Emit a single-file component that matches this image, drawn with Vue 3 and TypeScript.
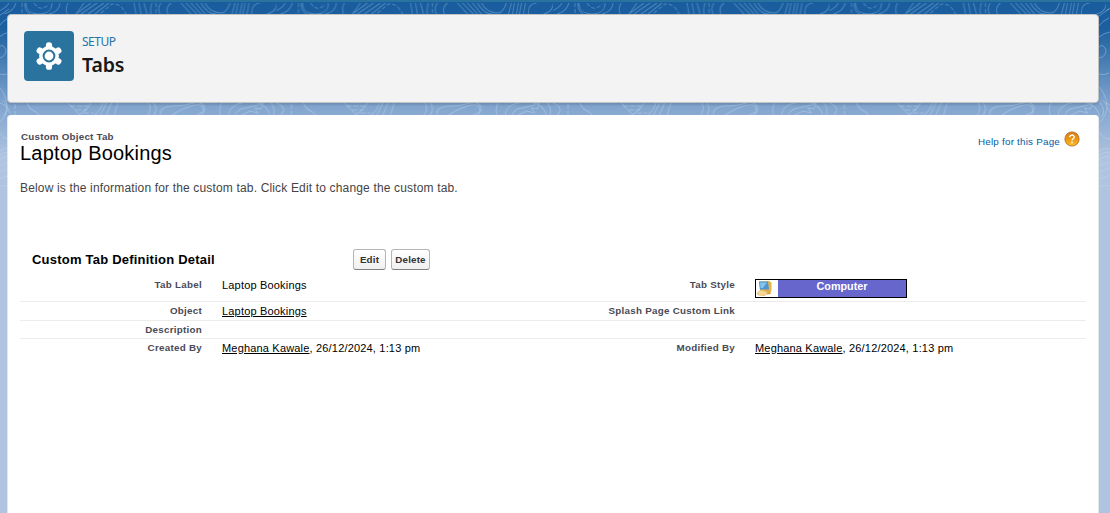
<script setup lang="ts">
interface Field { label: string; link?: string; text?: string; swatch?: string }
interface Row { height: number; left: Field; right?: Field }

const rows: Row[] = [
  { height: 26, left: { label: 'Tab Label', text: 'Laptop Bookings' }, right: { label: 'Tab Style', swatch: 'Computer' } },
  { height: 19, left: { label: 'Object', link: 'Laptop Bookings' }, right: { label: 'Splash Page Custom Link' } },
  { height: 18, left: { label: 'Description' } },
  {
    height: 22,
    left: { label: 'Created By', link: 'Meghana Kawale', text: ', 26/12/2024, 1:13 pm' },
    right: { label: 'Modified By', link: 'Meghana Kawale', text: ', 26/12/2024, 1:13 pm' },
  },
]
</script>

<template>
  <div class="page">
    <svg class="topo" width="1110" height="200" viewBox="0 0 1110 200" fill="none" aria-hidden="true">
      <defs>
        <pattern id="contours-top" width="276.5" height="14" patternUnits="userSpaceOnUse">
          <g fill="none" stroke="#8fb9de" stroke-opacity=".42" stroke-width="1">
            <path d="M-1 11Q6 8 9 3M4 14Q13 12 16 3M26 3C26 10 31 14 39 14S52 10 52 3M30 14Q24 10 25 3M49 14Q59 12 60 3M68 3Q65 8 67 14" />
            <path d="M22 3v11M34 3Q41 13 49 4" stroke-dasharray="4 2" />
            <path d="M76 14L91 3M81 14L97 3M88 14L104 3M95 14L109 3M76 14L84 3" />
            <path d="M101 13L112 4Q121 3 126 14" stroke-dasharray="4 2" />
            <path d="M134 3L136 14M139 3L141 14M144 3L147 14M151 14Q150 8 152 3M160 14Q157 8 161 3M168 14Q165 8 171 3" />
            <path d="M156 3v11" stroke-dasharray="4 2" />
            <path d="M181 3L191 14M186 3L197 14M191 3L201 14M196 3L205 14M201 3Q207 14 216 14M205 3Q210 13 222 13Q227 12 230 3M232 14L235 3M236 14L238 3M240 14L242 3M243 14L245 3M247 14L249 3M252 14Q251 4 260 3M267 14Q276 12 277 3" />
          </g>
        </pattern>
        <pattern id="contours-bottom" y="102" width="276.5" height="14" patternUnits="userSpaceOnUse">
          <g fill="none" stroke="#c9dcf2" stroke-opacity=".38" stroke-width="1">
            <path d="M0 1Q8 4 7 9L4 14M27 1Q29 7 36 10L40 14M68 1L80 13M91 1Q87 8 79 13M94 14Q102 7 103 0M100 14L107 0M106 14L112 0M114 14L118 0M148 0Q153 7 147 14M153 0Q159 7 153 14" />
            <path d="M15 2v12M70 4h18M76 8h11M84 11h10" stroke-dasharray="5 2" />
            <path d="M161 14Q158 5 173 4Q184 4 197 0Q210 3 201 14M171 14Q179 8 191 4Q205 0 203 10L195 14M221 14Q218 7 222 0M229 14C228 5 238 0 250 0S268 6 270 14M235 14Q238 6 246 6L258 3L263 1L261 7L255 6L258 11L250 9L240 14M270 0Q276 7 273 14" />
          </g>
        </pattern>
        <g id="side-contours" stroke="#c5daf1" stroke-opacity=".38">
          <path d="M0 16L10 9M0 26Q3 21 10 18M0 37Q5 33 11 32M0 47Q4 43 7 50Q7 57 0 58M0 74Q5 76 10 73M0 87Q7 94 8 106Q8 116 0 123M4 100Q9 107 11 113M0 132Q4 139 11 139M0 151Q5 147 11 149M0 155Q5 151 11 153M0 160Q5 155 11 157M0 166Q5 162 11 163M0 172L11 168M0 179L11 175M0 187Q6 184 11 186" />
        </g>
      </defs>
      <rect y="3" width="1110" height="11" fill="url(#contours-top)" />
      <rect y="102" width="1110" height="14" fill="url(#contours-bottom)" />
      <use href="#side-contours" x="-1" />
      <use href="#side-contours" x="1099" />
    </svg>

    <header class="banner">
      <div class="banner-icon">
        <svg width="28" height="28" viewBox="0 0 28 28" aria-hidden="true">
          <g fill="#fff">
            <circle cx="14" cy="14" r="9.9" />
            <g id="tooth"><rect x="10.9" y="0.2" width="6.2" height="8" rx="2.9" /></g>
            <use v-for="n in 5" :key="n" href="#tooth" :transform="`rotate(${n * 60} 14 14)`" />
          </g>
          <circle cx="14" cy="14" r="5.4" fill="#fff" stroke="#2a739e" stroke-width="2" />
        </svg>
      </div>
      <div class="banner-text">
        <span class="eyebrow">SETUP</span>
        <h1>Tabs</h1>
      </div>
    </header>

    <main class="card">
      <div class="heading">
        <div>
          <div class="type">Custom Object Tab</div>
          <h2>Laptop Bookings</h2>
        </div>
        <a class="help">
          <span>Help for this Page</span>
          <svg width="16" height="16" viewBox="0 0 16 16" aria-hidden="true">
            <defs>
              <linearGradient id="amber" x2="0" y2="1">
                <stop stop-color="#d57c13" /><stop offset=".5" stop-color="#ed9511" /><stop offset="1" stop-color="#ffc12c" />
              </linearGradient>
            </defs>
            <circle cx="8" cy="8" r="7.1" fill="url(#amber)" stroke="#a9631b" stroke-width=".8" />
            <path d="M5.8 6.2C5.8 3.4 10.2 3.4 10.2 6C10.2 7.8 8 7.7 8 9.6" fill="none" stroke="#fff" stroke-width="1.4" />
            <rect x="7.2" y="10.7" width="1.6" height="1.6" fill="#fff" />
          </svg>
        </a>
      </div>
      <p class="intro">Below is the information for the custom tab. Click Edit to change the custom tab.</p>

      <section class="detail">
        <div class="toolbar">
          <h3>Custom Tab Definition Detail</h3>
          <button class="edit">Edit</button>
          <button class="delete">Delete</button>
        </div>
        <div v-for="row in rows" :key="row.left.label" class="row" :style="{ height: `${row.height}px` }">
          <template v-for="(field, i) in [row.left, row.right]" :key="i">
            <div class="label">{{ field?.label }}</div>
            <div class="value">
              <div v-if="field?.swatch" class="swatch">
                <svg width="22" height="17" viewBox="0 0 22 17" aria-hidden="true">
                  <rect width="22" height="17" fill="#fff" />
                  <path d="M3 1.5L13 1L15.5 2.5V11L14 12.5L4 10.5Z" fill="#e9b548" />
                  <path d="M3 1.5L12 1.5L13 9.5L4 9.5Z" fill="#4d94d0" />
                  <path d="M4 2.5L11 2.5L7 8H4.6Z" fill="#83c4ec" />
                  <path d="M9 10L14 11L15 14L11 14.5L8 12Z" fill="#dba64b" />
                  <path d="M1 13L5 10L12 12L9 15.5L2 15Z" fill="#f5d894" stroke="#d6ad65" stroke-width=".6" />
                </svg>
                <span>{{ field.swatch }}</span>
              </div>
              <template v-else><a v-if="field?.link">{{ field.link }}</a>{{ field?.text }}</template>
            </div>
          </template>
        </div>
      </section>
    </main>
  </div>
</template>

<style>
body { margin: 0; overflow: hidden; }
</style>

<style scoped>
* { box-sizing: border-box; }
h1, h2, h3, p { margin: 0; }
.page {
  position: relative;
  height: 513px;
  padding: 14px 11px 0 7px;
  overflow: hidden;
  background: linear-gradient(#2a739e 2px, transparent 2px), linear-gradient(#195d9f 0, #1b5f9f 28px, #7ba1cd 100px, #b0c4df 158px, #b0c4df 100%);
  font-family: "Liberation Sans", Arial, sans-serif;
}
.topo { position: absolute; left: 0; top: 0; }
.banner {
  position: relative;
  display: flex;
  height: 89px;
  padding: 16px;
  border: 1px solid #c3c3c3;
  border-radius: 4px;
  background: #f3f3f3;
  box-shadow: 0 2px 2px rgba(0, 0, 0, .12);
}
.banner-icon {
  display: grid;
  place-items: center;
  width: 50px;
  height: 50px;
  border-radius: 4px;
  background: #2a739e;
}
.banner-text { margin-left: 8px; }
.eyebrow { display: block; height: 20px; padding-top: 1px; font: 12px/20px "Noto Sans", sans-serif; color: #2574a9; letter-spacing: -.5px; }
h1 { font: 600 19.5px/25px "Noto Sans", sans-serif; color: #181818; margin-top: 1px; letter-spacing: -.1px; }
.card {
  position: relative;
  height: 410px;
  margin-top: 12px;
  padding: 15px 13px 0;
  border: 1px solid #e4e8ee;
  border-width: 0 1px;
  border-radius: 4px 4px 0 0;
  background: #fff;
}
.heading { display: flex; justify-content: space-between; height: 50px; margin-left: -1px; }
.type { padding-left: 1px; font-size: 9.8px; line-height: 13px; font-weight: bold; letter-spacing: .22px; color: #4a4a56; }
h2 { font-size: 20px; line-height: 20px; font-weight: normal; letter-spacing: .2px; color: #000; }
.help { display: flex; gap: 4px; margin-right: 5px; font-size: 9.8px; line-height: 23px; letter-spacing: .23px; color: #015ba7; }
.help svg { margin-top: 1px; }
.intro { margin-left: -1px; font-size: 12px; line-height: 16px; letter-spacing: .16px; color: #444; }
.detail { margin: 53px -1px 0; }
.toolbar { display: flex; align-items: center; height: 21px; padding-left: 12px; margin-bottom: 6px; }
h3 { width: 321px; font-size: 13px; line-height: 21px; letter-spacing: .22px; color: #000; }
button {
  height: 21px;
  padding: 0;
  border: 1px solid #b5b5b5;
  border-bottom-color: #7f7f7f;
  border-radius: 3px;
  background: linear-gradient(#fff, #f0f0f0);
  font: bold 9.8px/19px "Liberation Sans", Arial, sans-serif;
  letter-spacing: .15px;
  color: #333;
}
.edit { width: 33px; margin-right: 5px; }
.delete { width: 39px; }
.row { display: grid; grid-template-columns: 182px 351px 182px 351px; border-bottom: 1px solid #ececec; }
.row:last-child { border: 0; }
.label { padding-top: 2px; font-size: 9.8px; line-height: 14px; font-weight: bold; letter-spacing: .27px; text-align: right; color: #4a4a56; }
.value { padding: 2px 0 0 20px; font-size: 11px; line-height: 14px; letter-spacing: .18px; color: #000; white-space: nowrap; }
.value a { text-decoration: underline; }
.swatch { display: flex; width: 152px; height: 19px; margin-top: 1px; border: 1px solid #000; background: #66c; }
.swatch svg { flex: none; }
.swatch span { flex: 1; font-size: 10.8px; line-height: 13px; font-weight: bold; letter-spacing: 0; text-align: center; color: #fff; }
</style>
